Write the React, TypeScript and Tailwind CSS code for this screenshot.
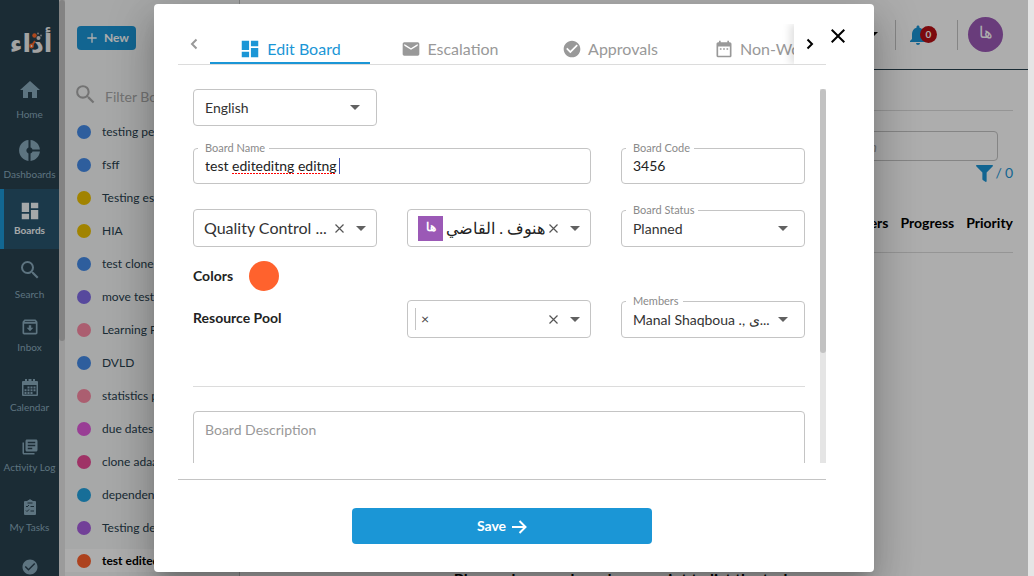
import type { ReactNode } from "react";
import {
  MdHome,
  MdDonutSmall,
  MdDashboard,
  MdSearch,
  MdOutlineArchive,
  MdLibraryBooks,
  MdCheckCircle,
  MdNotifications,
  MdEmail,
  MdDateRange,
  MdAdd,
  MdClose,
} from "react-icons/md";
import { FaFilter } from "react-icons/fa";

function Logo() {
  return (
    <svg viewBox="0 0 46 42" className="h-[42px] w-[46px]" role="img" aria-label="أداء">
      <text
        x="24"
        y="34"
        textAnchor="middle"
        direction="rtl"
        fill="#f1f1f1"
        fontSize="25"
        fontWeight="700"
        fontFamily="'DejaVu Sans', sans-serif"
      >
        أداء
      </text>
      <path d="M24.500 28L28 23" stroke="#ff6a2b" strokeWidth="2" />
      <circle cx="24.500" cy="28" r="2.400" fill="#ff6a2b" />
      <circle cx="24.500" cy="28" r="0.900" fill="#f1f1f1" />
      <circle cx="27.500" cy="17.500" r="2.200" fill="#ff6a2b" />
      <circle cx="31.500" cy="20" r="2" fill="#d8d8d8" />
      <circle cx="31" cy="15.500" r="0.900" fill="#b8b8b8" />
      <circle cx="34" cy="17.500" r="0.900" fill="#b8b8b8" />
    </svg>
  );
}

function CalendarIcon() {
  return (
    <svg viewBox="0 0 16 17" className="h-[17px] w-4" fill="currentColor" fillRule="evenodd">
      <path d="M3 0h2v2h1.500V0h3v2H11V0h2v2h2a1 1 0 0 1 1 1v13a1 1 0 0 1-1 1H1a1 1 0 0 1-1-1V3a1 1 0 0 1 1-1h2zM1.500 6v9.500h13V6z" />
      <path d="M5.500 7.500h2v2h-2zM8.500 7.500h2v2h-2zM11.500 7.500h2v2h-2zM2.500 10.300h2v2h-2zM5.500 10.300h2v2h-2zM8.500 10.300h2v2h-2zM11.500 10.300h2v2h-2zM2.500 13h2v2h-2zM5.500 13h2v2h-2zM8.500 13h2v2h-2z" />
    </svg>
  );
}

function TasksIcon() {
  return (
    <svg viewBox="0 0 12 16" className="h-4 w-3">
      <path
        fill="currentColor"
        d="M1 2h2.500V1.500L4.500 1h.3a1.300 1.300 0 0 1 2.400 0h.3l1 .5V2H11a1 1 0 0 1 1 1v12a1 1 0 0 1-1 1H1a1 1 0 0 1-1-1V3a1 1 0 0 1 1-1z"
      />
      <path
        fill="none"
        stroke="#29414f"
        strokeWidth="1"
        d="M3.500 4h5M2 7l1 1 2-2M6.500 7.500H10M2 11.500l1 1 2-2M6.500 12H10"
      />
    </svg>
  );
}

type Nav = { label: string; icon: ReactNode; kind: "tall" | "active" | "short" };

const NAV: Nav[] = [
  { label: "Home", icon: <MdHome size={24} />, kind: "tall" },
  { label: "Dashboards", icon: <MdDonutSmall size={25} />, kind: "tall" },
  { label: "Boards", icon: <MdDashboard size={22} />, kind: "active" },
  { label: "Search", icon: <MdSearch size={24} />, kind: "tall" },
  { label: "Inbox", icon: <MdOutlineArchive size={20} />, kind: "short" },
  { label: "Calendar", icon: <CalendarIcon />, kind: "short" },
  { label: "Activity Log", icon: <MdLibraryBooks size={18} />, kind: "short" },
  { label: "My Tasks", icon: <TasksIcon />, kind: "short" },
  { label: "", icon: <MdCheckCircle size={18} />, kind: "short" },
];

const NAV_STYLE = {
  tall: "gap-1 pt-[9px] text-[#8aabbd]",
  active: "border-l-4 border-[#1b98d8] bg-[#28556e] pt-[11px] pr-1 font-bold text-[#f4f8fa]",
  short: "pt-[6px] text-[#8aabbd]",
};
const ICON_STYLE = { tall: "h-6", active: "h-[22px]", short: "h-6" };

const BOARDS: [string, string][] = [
  ["testing performance", "bg-[#448be8]"],
  ["fsff", "bg-[#448be8]"],
  ["Testing estimates", "bg-[#eec200]"],
  ["HIA", "bg-[#eec200]"],
  ["test clone", "bg-[#448be8]"],
  ["move test", "bg-[#816ce8]"],
  ["Learning Plan", "bg-[#fd8ba6]"],
  ["DVLD", "bg-[#448be8]"],
  ["statistics page", "bg-[#fd8ba6]"],
  ["due dates", "bg-[#e25cdc]"],
  ["clone adaa", "bg-[#ea4b97]"],
  ["dependencies", "bg-[#22a2e0]"],
  ["Testing details", "bg-[#a85fe0]"],
  ["test editeditng editng", "bg-[#ff622d]"],
];

function Caret({ className = "" }: { className?: string }) {
  return (
    <svg viewBox="0 0 10 5" className={"pointer-events-none h-[5px] w-[10px] shrink-0 " + className}>
      <path d="M0 0h10L5 5z" fill="currentColor" />
    </svg>
  );
}

function Cross() {
  return (
    <svg viewBox="0 0 9 9" className="size-[9px]">
      <path d="M.5.5l8 8M8.500.5l-8 8" stroke="#555" strokeWidth="1.200" />
    </svg>
  );
}

function Field({
  id,
  label,
  className,
  children,
}: {
  id: string;
  label: string;
  className: string;
  children: ReactNode;
}) {
  return (
    <div className={"relative flex items-center self-end rounded border border-[#c4c4c4] " + className}>
      <label
        htmlFor={id}
        className="absolute -top-2 left-1 bg-white pr-1 pl-[7px] text-[11px] leading-[14px] text-[#8a8a8a]"
      >
        {label}
      </label>
      {children}
    </div>
  );
}

const selectBase = "min-w-0 flex-1 appearance-none truncate bg-transparent outline-none";
const box = "flex items-center rounded border border-[#c4c4c4]";
const squiggle =
  "absolute top-6 h-px bg-[repeating-linear-gradient(90deg,#ff0000_0px,#ff0000_2px,transparent_2px,transparent_3px)]";

function Tab({ icon, label, active = false }: { icon: ReactNode; label: string; active?: boolean }) {
  return (
    <button
      role="tab"
      aria-selected={active}
      className={
        "flex h-10 min-w-40 shrink-0 items-center justify-center gap-1.5 border-b-2 px-6 pt-3 text-base whitespace-nowrap " +
        (active ? "border-[#1b96d6] text-[#1b96d6]" : "border-transparent text-[#999]")
      }
    >
      {icon}
      {label}
    </button>
  );
}

function EditBoardDialog() {
  return (
    <section
      role="dialog"
      aria-label="Edit Board"
      className="relative flex w-full max-w-[720px] flex-col rounded bg-white pt-5 pr-12 pb-7 pl-6 shadow-[0_11px_15px_-7px_rgba(0,0,0,0.2),0_24px_38px_3px_rgba(0,0,0,0.14),0_9px_46px_8px_rgba(0,0,0,0.12)]"
    >
      <button aria-label="Close" className="absolute top-5 right-6 text-black">
        <MdClose size={24} />
      </button>

      <div className="flex h-[41px] border-b border-[#dcdcdc]" role="tablist">
        <button aria-label="Previous tabs" className="flex w-8 shrink-0 items-center justify-center text-[#999]">
          <svg viewBox="0 0 8 12" className="h-3 w-2">
            <path d="M6.500 1.500L2 6l4.500 4.500" fill="none" stroke="currentColor" strokeWidth="2" />
          </svg>
        </button>
        <div className="flex min-w-0 flex-1 overflow-hidden">
          <Tab active icon={<MdDashboard size={22} />} label="Edit Board" />
          <Tab icon={<MdEmail size={20} />} label="Escalation" />
          <Tab icon={<MdCheckCircle size={20} />} label="Approvals" />
          <Tab icon={<MdDateRange size={20} />} label="Non-Working Days" />
        </div>
        <button
          aria-label="Next tabs"
          className="flex w-8 shrink-0 items-center justify-center text-black shadow-[-4px_0_8px_rgba(0,0,0,0.12)] [clip-path:inset(0_0_0_-12px)]"
        >
          <svg viewBox="0 0 8 12" className="h-3 w-2">
            <path d="M1.500 1.500L6 6l-4.500 4.500" fill="none" stroke="currentColor" strokeWidth="2" />
          </svg>
        </button>
      </div>

      <div className="mt-6 flex h-[374px] overflow-hidden">
        <form className="min-w-0 flex-1 px-[15px] text-sm text-[#333]">
          <div className="grid grid-cols-3 gap-x-[30px]">
            <div className={box + " h-[37px] px-[11px]"}>
              <select aria-label="Language" className={selectBase}>
                <option>English</option>
              </select>
              <Caret className="mr-[5px] text-[#616161]" />
            </div>

            <Field id="name" label="Board Name" className="col-span-2 col-start-1 mt-[22px] h-9 px-[11px]">
              <input
                id="name"
                defaultValue="test editeditng editng"
                className="w-full bg-transparent text-[#222] outline-none"
              />
              <span className={squiggle + " left-[38px] w-[63px]"} />
              <span className={squiggle + " left-[103px] w-[39px]"} />
              <span className="absolute top-[9px] left-[145px] h-4 w-px bg-[#3f51b5]" />
            </Field>
            <Field id="code" label="Board Code" className="h-9 px-[11px]">
              <input id="code" defaultValue="3456" className="w-full bg-transparent text-[#222] outline-none" />
            </Field>

            <div className={box + " mt-[25px] h-[38px] pr-2.5 pl-2.5"}>
              <select aria-label="Category" className={selectBase + " text-base"}>
                <option>Quality Control ...</option>
              </select>
              <button type="button" aria-label="Clear category" className="mr-3">
                <Cross />
              </button>
              <Caret className="text-[#616161]" />
            </div>
            <div className={box + " mt-[25px] h-[38px] px-2.5"}>
              <span className="flex size-[25px] shrink-0 items-center justify-center bg-[#9b59b6] pb-0.5 text-xs font-bold text-white">
                ها
              </span>
              <select aria-label="Owner" dir="rtl" className={selectBase + " text-base text-[#222]"}>
                <option>هنوف . القاضي</option>
              </select>
              <button type="button" aria-label="Clear owner" className="mr-3 ml-1">
                <Cross />
              </button>
              <Caret className="text-[#616161]" />
            </div>
            <Field id="status" label="Board Status" className="h-[37px] px-[11px]">
              <select id="status" className={selectBase}>
                <option>Planned</option>
              </select>
              <Caret className="mr-[5px] text-[#616161]" />
            </Field>
          </div>

          <div className="mt-3.5 flex items-center gap-4 font-bold text-[#222]">
            Colors
            <button type="button" aria-label="Board color" className="size-[30px] rounded-full bg-[#ff622d]" />
          </div>

          <div className="mt-[9px] grid grid-cols-3 gap-x-[30px]">
            <span className="pt-2 font-bold text-[#222]">Resource Pool</span>
            <div className={box + " h-[38px] pr-2.5 pl-[7px]"}>
              <span className="flex h-[22px] flex-1 items-center border-l border-[#c4c4c4] pl-[5px]">
                <button type="button" aria-label="Remove resource" className="leading-none text-[#444]">
                  ×
                </button>
              </span>
              <button type="button" aria-label="Clear resources" className="mr-3">
                <Cross />
              </button>
              <Caret className="text-[#616161]" />
            </div>
            <Field id="members" label="Members" className="h-[37px] px-[11px]">
              <select id="members" className={selectBase}>
                <option>Manal Shaqboua ., ى...</option>
              </select>
              <Caret className="mr-[5px] text-[#616161]" />
            </Field>
          </div>

          <hr className="mt-12 border-[#dcdcdc]" />
          <textarea
            aria-label="Board Description"
            placeholder="Board Description"
            className="mt-6 block h-24 w-full resize-none rounded border border-[#c4c4c4] px-[11px] py-2 text-sm placeholder:text-[#999] focus:outline-none"
          />
        </form>
        <div className="w-1.5 shrink-0 bg-[#e5e5e5]">
          <div className="h-[264px] rounded-full bg-[#c2c2c2]" />
        </div>
      </div>

      <hr className="mt-4 border-[#c4c4c4]" />
      <button className="mt-7 flex h-9 w-[300px] items-center justify-center gap-1.5 self-center rounded bg-[#1b96d6] text-sm font-bold text-white">
        Save
        <svg viewBox="0 0 15 14" className="mt-0.5 h-[14px] w-[15px]">
          <path d="M0 7h13M7.500 1l6 6-6 6" fill="none" stroke="currentColor" strokeWidth="2" />
        </svg>
      </button>
    </section>
  );
}

export default function App() {
  return (
    <div className="relative flex h-screen overflow-hidden bg-white font-['Lato','Noto_Sans',sans-serif]">
      <nav className="flex w-[59px] shrink-0 flex-col bg-[#29414f]">
        <div className="flex h-[69px] shrink-0 justify-center pt-[18px]">
          <Logo />
        </div>
        {NAV.map((n) => (
          <a
            key={n.label}
            href="#"
            aria-label={n.label || "Approvals"}
            className={"flex h-[60px] shrink-0 flex-col items-center text-[10px] leading-4 whitespace-nowrap " + NAV_STYLE[n.kind]}
          >
            <span className={"flex items-center justify-center " + ICON_STYLE[n.kind]}>{n.icon}</span>
            {n.label}
          </a>
        ))}
      </nav>
      <div className="w-1.5 shrink-0 bg-[#e5e5e5]">
        <div className="h-[341px] rounded-full bg-[#c2c2c2]" />
      </div>

      <aside className="flex w-[175px] shrink-0 flex-col border-r border-[#c4c4c4] bg-[#f6f8f8]">
        <button className="mt-[26px] ml-3 flex h-6 w-[59px] items-center justify-center gap-1 rounded-sm bg-[#1b96d6] text-xs font-bold text-white">
          <MdAdd size={16} />
          New
        </button>
        <label className="mt-[29px] ml-2 flex h-[30px] items-center text-[#aaa]">
          <MdSearch size={25} className="shrink-0" />
          <input
            aria-label="Filter Boards"
            placeholder="Filter Boards"
            className="ml-[7px] w-28 bg-transparent pt-1.5 text-sm outline-none placeholder:text-[#aaa]"
          />
        </label>
        <ul className="mt-[11px] flex flex-col gap-2.5">
          {BOARDS.map(([name, color], i) => (
            <li
              key={name}
              className={
                "flex h-[23px] items-center gap-[11px] overflow-hidden pl-3 text-xs whitespace-nowrap " +
                (i === BOARDS.length - 1 ? "bg-white font-bold text-black" : "text-[#29414f]")
              }
            >
              <span className={"size-3.5 shrink-0 rounded-full " + color} />
              {name}
            </li>
          ))}
        </ul>
      </aside>

      <main className="flex min-w-0 flex-1 flex-col">
        <header className="flex h-[70px] shrink-0 items-center justify-end border-b border-[#29414f] pr-[25px]">
          <Caret className="mr-[17px] text-black" />
          <span className="h-[30px] w-px bg-[#c4c4c4]" />
          <button aria-label="Notifications" className="ml-2.5 flex items-center text-[#1b96d6]">
            <MdNotifications size={24} />
            <span className="-ml-2.5 flex size-[17px] items-center justify-center rounded-full bg-[#b70f14] text-[10px] font-bold text-white">
              0
            </span>
          </button>
          <span className="ml-5 h-[30px] w-px bg-[#c4c4c4]" />
          <span className="ml-2.5 flex size-[35px] items-center justify-center rounded-full bg-[#9b59b6] pb-1.5 text-base text-white">
            ها
          </span>
        </header>
        <div className="flex flex-1 flex-col pr-[15px]">
          <div className="h-[41px] shrink-0 border-b border-[#dcdcdc]" />
          <input
            aria-label="Search cards"
            placeholder="Search by description"
            className="mt-5 mr-[15px] h-[30px] w-[400px] self-end rounded border border-[#c4c4c4] pr-[120px] text-right text-sm italic placeholder:text-[#aaa]"
          />
          <div className="mt-0.5 flex items-center justify-end gap-[3px] text-sm text-[#1b96d6]">
            <FaFilter size={17} />
            <span>/</span>
            <span>0</span>
          </div>
          <div className="mt-[30px] flex justify-end gap-3 border-b border-[#dcdcdc] pb-[19px] text-sm leading-5 font-bold text-black">
            <span>Members</span>
            <span>Progress</span>
            <span>Priority</span>
          </div>
          <p className="mt-[314px] text-center font-bold whitespace-nowrap text-black">
            Please choose a board or a sprint to list the tasks
          </p>
        </div>
      </main>
      <div className="w-1.5 shrink-0" />

      <div className="absolute inset-y-0 right-1.5 left-0 flex items-center justify-center bg-black/32">
        <EditBoardDialog />
      </div>
      <div className="absolute inset-y-0 right-0 w-1.5 bg-[#e5e5e5]" />
    </div>
  );
}
